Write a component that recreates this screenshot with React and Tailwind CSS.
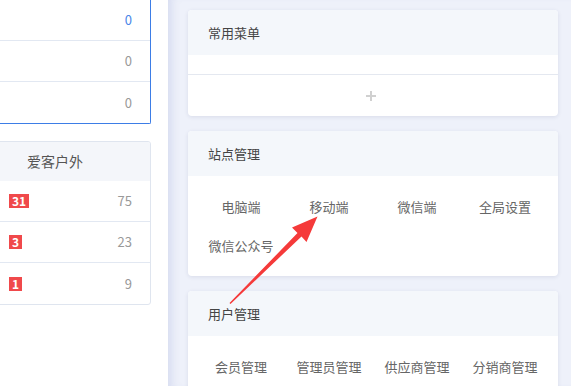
import React from "react";

const font = { fontFamily: '"Noto Sans CJK SC", "Noto Sans", sans-serif' };

function Card({ title, children }) {
  return (
    <div className="shrink-0 bg-white rounded-[4px] shadow-[0_1px_4px_rgba(30,40,90,0.10)] overflow-hidden">
      <div className="h-[45px] bg-[#f4f7fb] flex items-center pl-[20px] text-[13px] text-[#444]">
        {title}
      </div>
      {children}
    </div>
  );
}

function Item({ children }) {
  return (
    <div className="h-[39px] flex items-center justify-center text-[13px] text-[#666] whitespace-nowrap">
      {children}
    </div>
  );
}

export default function App() {
  const rows1 = ["0", "0", "0"];
  const rows2 = [
    ["31", "75"],
    ["3", "23"],
    ["1", "9"],
  ];
  return (
    <div className="relative w-[571px] h-[386px] overflow-hidden flex bg-white" style={font}>
      <div className="w-[168px] shrink-0 bg-white">
        <div className="w-[152px] ml-[-1px] border border-t-0 border-[#3d7de6] rounded-br-[2px]">
          {rows1.map((v, i) => (
            <div
              key={i}
              className={`h-[41px] flex items-center justify-end pr-[18px] text-[13px] ${
                i < 2 ? "border-b border-[#e2e8f2]" : ""
              } ${i === 0 ? "text-[#4a86e8]" : "text-[#999]"}`}
            >
              {v}
            </div>
          ))}
        </div>
        <div className="mt-[17px] w-[152px] ml-[-1px] border border-[#dfe5ef] rounded-r-[3px] overflow-hidden">
          <div className="h-[39px] bg-[#f4f6fa] flex items-center pl-[27px] text-[14px] text-[#555]">
            爱客户外
          </div>
          {rows2.map(([b, v], i) => (
            <div
              key={i}
              className={`h-[41px] flex items-center justify-between pl-[9px] pr-[18px] ${
                i < 2 ? "border-b border-[#e2e8f2]" : ""
              }`}
            >
              <span className="h-[14px] px-[3px] bg-[#f0494b] text-white text-[12px] font-bold leading-[14px] flex items-center">
                {b}
              </span>
              <span className="text-[13px] text-[#999]">{v}</span>
            </div>
          ))}
        </div>
      </div>
      <div className="flex-1 bg-[#eef1fa] shadow-[inset_10px_0_8px_-6px_rgba(200,206,235,0.6)] pl-[20px] pr-[13px] pt-[10px] flex flex-col gap-[15px]">
        <Card title="常用菜单">
          <div className="h-[20px] border-b border-[#e4e8f0]" />
          <div className="h-[41px] flex items-center justify-center pr-[4px]">
            <svg width="10" height="10" viewBox="0 0 10 10">
              <path d="M5 0V10M0 5H10" stroke="#d0d0d0" strokeWidth="2" />
            </svg>
          </div>
        </Card>
        <Card title="站点管理">
          <div className="grid grid-cols-4 px-[9px] pt-[11px] pb-[11px]">
            <Item>电脑端</Item>
            <Item>移动端</Item>
            <Item>微信端</Item>
            <Item>全局设置</Item>
            <Item>微信公众号</Item>
          </div>
        </Card>
        <Card title="用户管理">
          <div className="grid grid-cols-4 px-[9px] pt-[11px] pb-[11px]">
            <Item>会员管理</Item>
            <Item>管理员管理</Item>
            <Item>供应商管理</Item>
            <Item>分销商管理</Item>
          </div>
        </Card>
      </div>
      <svg className="absolute left-0 top-0 pointer-events-none" width="571" height="386">
        <polygon
          points="230.5,304 301.5,236.5 306.5,242 317.5,216.5 292,227.5 297.5,233 229.5,303"
          fill="#f53a3a"
        />
      </svg>
    </div>
  );
}
